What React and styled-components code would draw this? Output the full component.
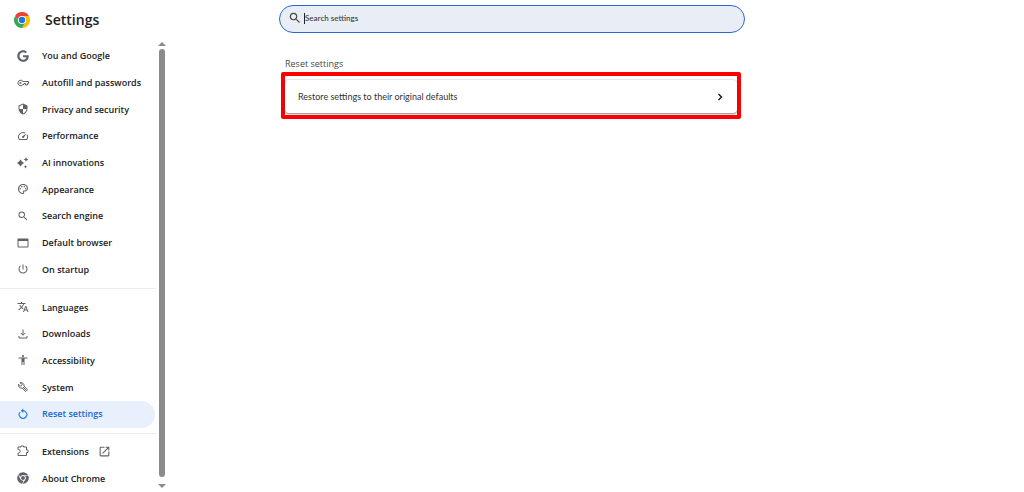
import React, { useState } from 'react';
import styled, { createGlobalStyle } from 'styled-components';
import { FaChrome, FaGoogle } from 'react-icons/fa';
import {
  MdAccessibility,
  MdOpenInNew,
  MdOutlinePalette,
  MdPowerSettingsNew,
  MdSearch,
  MdSecurity,
  MdSpeed,
  MdTranslate,
} from 'react-icons/md';

const colors = {
  text: '#202124',
  icon: '#5f6368',
  accent: '#1967d2',
  selected: '#e8f0fe',
  line: '#ececec',
  highlight: '#ff0000',
};

const ChromeLogo = () => (
  <svg viewBox="0 0 48 48" width="16" height="16" aria-hidden="true">
    <path fill="#ea4335" d="M24 12h20.800A24 24 0 0 0 3.200 12l10.400 18z" />
    <path fill="#fbbc04" d="M34.400 30 24 48a24 24 0 0 0 20.800-36H24z" />
    <path fill="#34a853" d="M13.600 30 3.200 12A24 24 0 0 0 24 48l10.400-18z" />
    <circle cx="24" cy="24" r="12" fill="#fff" />
    <circle cx="24" cy="24" r="9.500" fill="#1a73e8" />
  </svg>
);

const KeyIcon = () => (
  <svg viewBox="0 0 24 24" fill="none" stroke="currentColor" strokeWidth="2" aria-hidden="true">
    <path d="M12 9a5.500 5.500 0 1 0 0 6h2v-2h3v3h4v-3h2V9z" />
    <circle cx="7" cy="12" r="2" fill="currentColor" stroke="none" />
  </svg>
);

const SparkIcon = () => (
  <svg viewBox="0 0 24 24" fill="currentColor" aria-hidden="true">
    <path d="M7 5l3 4 4 3-4 3-3 4-3-4-4-3 4-3z" />
    <path d="M18 0l1.500 3.500L23 5l-3.500 1.500L18 10l-1.500-3.500L13 5l3.500-1.500z" />
    <path d="M17 16l1.200 2.300 2.300 1.200-2.300 1.200L17 23l-1.200-2.300-2.300-1.200 2.300-1.200z" />
  </svg>
);

const BrowserIcon = () => (
  <svg viewBox="0 0 24 24" fill="currentColor" aria-hidden="true">
    <path d="M3 3h18a2 2 0 0 1 2 2v14a2 2 0 0 1-2 2H3a2 2 0 0 1-2-2V5c0-1.100.9-2 2-2zm0 5v11h18V8z" />
  </svg>
);

const DownloadIcon = () => (
  <svg viewBox="0 0 24 24" fill="none" stroke="currentColor" strokeWidth="2" aria-hidden="true">
    <path d="M12 3v11M7.500 10l4.500 4.500 4.500-4.500M4 16v4h16v-4" />
  </svg>
);

const WrenchIcon = () => (
  <svg viewBox="0 0 24 24" fill="none" stroke="currentColor" strokeWidth="2" aria-hidden="true">
    <path d="M6 3.500A6 6 0 0 1 14 10l7 7.500-3.500 3.500-7.500-7A6 6 0 0 1 3 6.500l4 4L10.500 7z" />
    <path d="M12 12l7 7" />
  </svg>
);

const ResetIcon = () => (
  <svg viewBox="0 0 24 24" fill="none" stroke="currentColor" strokeWidth="2.200" aria-hidden="true">
    <path d="M6.500 8a7.500 7.500 0 1 0 11 0A7.500 7.500 0 0 0 12 5.500H9" />
    <path fill="currentColor" stroke="none" d="M12.500 1v9L8 5.500z" />
  </svg>
);

const PuzzleIcon = () => (
  <svg viewBox="0 0 24 24" fill="none" stroke="currentColor" strokeWidth="2" aria-hidden="true">
    <path d="M2 4h6V2h5v2h6v6h3v5h-3v6H2v-5h1a3 3 0 0 0 0-7H2z" />
  </svg>
);

const ChevronIcon = () => (
  <svg viewBox="0 0 8 8" width="8" height="8" fill="none" stroke="#202124" strokeWidth="1.500" aria-hidden="true">
    <path d="M2.500 1l3 3-3 3" />
  </svg>
);

const menu = [
  [
    { label: 'You and Google', icon: <FaGoogle /> },
    { label: 'Autofill and passwords', icon: <KeyIcon /> },
    { label: 'Privacy and security', icon: <MdSecurity /> },
    { label: 'Performance', icon: <MdSpeed /> },
    { label: 'AI innovations', icon: <SparkIcon /> },
    { label: 'Appearance', icon: <MdOutlinePalette /> },
    { label: 'Search engine', icon: <MdSearch /> },
    { label: 'Default browser', icon: <BrowserIcon /> },
    { label: 'On startup', icon: <MdPowerSettingsNew /> },
  ],
  [
    { label: 'Languages', icon: <MdTranslate /> },
    { label: 'Downloads', icon: <DownloadIcon /> },
    { label: 'Accessibility', icon: <MdAccessibility /> },
    { label: 'System', icon: <WrenchIcon /> },
    { label: 'Reset settings', icon: <ResetIcon /> },
  ],
  [
    { label: 'Extensions', icon: <PuzzleIcon />, external: true },
    { label: 'About Chrome', icon: <FaChrome /> },
  ],
];

const App = () => {
  const [active, setActive] = useState('Reset settings');
  const [query, setQuery] = useState('');

  return (
    <>
      <GlobalStyle />
      <Page>
        <Sidebar>
          <Brand>
            <ChromeLogo />
            <h1>Settings</h1>
          </Brand>

          <SidebarBody>
            <Menu aria-label="Settings sections">
              {menu.map((group, index) => (
                <React.Fragment key={group[0].label}>
                  {index > 0 && <Separator />}
                  {group.map((item) => (
                    <MenuLink
                      key={item.label}
                      href="#"
                      $active={item.label === active}
                      onClick={() => setActive(item.label)}
                    >
                      {item.icon}
                      <span>{item.label}</span>
                      {item.external && <MdOpenInNew />}
                    </MenuLink>
                  ))}
                </React.Fragment>
              ))}
            </Menu>

            <ScrollTrack aria-hidden="true">
              <ScrollArrow />
              <ScrollThumb />
              <ScrollArrow $down />
            </ScrollTrack>
          </SidebarBody>
        </Sidebar>

        <Main>
          <SearchBox>
            <MdSearch />
            <Caret />
            <input
              type="text"
              aria-label="Search settings"
              placeholder="Search settings"
              value={query}
              onChange={(e) => setQuery(e.target.value)}
            />
          </SearchBox>

          <Section>
            <h2>Reset settings</h2>
            <Highlight>
              <CardButton type="button">
                <span>Restore settings to their original defaults</span>
                <ChevronIcon />
              </CardButton>
            </Highlight>
          </Section>
        </Main>
      </Page>
    </>
  );
};

export default App;

const GlobalStyle = createGlobalStyle`
  * {
    box-sizing: border-box;
  }

  body {
    margin: 0;
    background-color: #fff;
    color: ${colors.text};
    font-family: 'Open Sans', 'Noto Sans', sans-serif;
    font-size: 9px;
  }

  h1, h2 {
    margin: 0;
  }

  input, button {
    font: inherit;
    color: inherit;
  }
`;

const Page = styled.div`
  display: grid;
  grid-template-columns: minmax(168px, 1fr) minmax(0, 466px) minmax(0, 1fr);
  min-height: 100vh;
`;

const Sidebar = styled.aside`
  display: flex;
  flex-direction: column;
  width: 168px;
  height: 100vh;
`;

const Brand = styled.header`
  display: flex;
  align-items: center;
  gap: 15px;
  height: 40px;
  padding-left: 14px;
  flex-shrink: 0;

  h1 {
    font-size: 14px;
    font-weight: 600;
    line-height: 20px;
  }
`;

const SidebarBody = styled.div`
  display: flex;
  flex: 1;
  min-height: 0;
`;

const Menu = styled.nav`
  display: flex;
  flex-direction: column;
  flex: 1;
  padding-top: 3px;
  overflow: hidden;
`;

const MenuLink = styled.a`
  display: flex;
  align-items: center;
  flex: 1;
  margin-right: 1px;
  padding-left: 16px;
  border-radius: 0 14px 14px 0;
  background-color: ${({ $active }) => ($active ? colors.selected : 'transparent')};
  color: ${({ $active }) => ($active ? colors.accent : colors.text)};
  font-weight: 600;
  line-height: 12px;
  text-decoration: none;
  white-space: nowrap;

  span {
    margin: 0 9px 0 13px;
  }

  svg {
    width: 13px;
    height: 13px;
    flex-shrink: 0;
    color: ${({ $active }) => ($active ? '#1a73e8' : colors.icon)};
  }

  svg:first-child {
    padding: 0 0 1px 1px;
  }
`;

const Separator = styled.hr`
  width: 100%;
  height: 1px;
  margin: 5px 0;
  border: 0;
  background-color: ${colors.line};
  flex-shrink: 0;
`;

const ScrollTrack = styled.div`
  display: flex;
  flex-direction: column;
  align-items: center;
  width: 12px;
  padding: 2px 0 4px;
`;

const ScrollThumb = styled.div`
  flex: 1;
  width: 6px;
  margin: 3px 0 7px;
  border-radius: 3px;
  background-color: #8b8b8b;
`;

const ScrollArrow = styled.div`
  border: 4px solid transparent;
  border-top-width: ${({ $down }) => ($down ? '4px' : 0)};
  border-bottom-width: ${({ $down }) => ($down ? 0 : '4px')};
  border-top-color: #8b8b8b;
  border-bottom-color: #8b8b8b;
`;

const Main = styled.main`
  padding-top: 5px;
`;

const SearchBox = styled.label`
  display: flex;
  align-items: center;
  height: 28px;
  padding: 0 8px 2px;
  border: 1px solid #2b67d1;
  border-radius: 14px;
  background-color: #e9eef6;

  svg {
    width: 14px;
    height: 14px;
    margin-right: 2px;
    color: #474747;
  }

  input {
    flex: 1;
    min-width: 0;
    padding: 0;
    border: 0;
    outline: 0;
    background: transparent;
    font-family: 'Lato', 'Open Sans', sans-serif;
    font-size: 8px;
    font-weight: 600;
  }

  input::placeholder {
    color: #474747;
    opacity: 1;
  }
`;

const Caret = styled.span`
  width: 1px;
  height: 11px;
  background-color: ${colors.text};
`;

const Section = styled.section`
  padding: 24px 4px 0 2px;

  h2 {
    padding-left: 4px;
    color: #474747;
    font-size: 9px;
    font-weight: 400;
    line-height: 14px;
  }
`;

const Highlight = styled.div`
  margin-top: 1px;
  padding: 4px 0 2px;
  border: 4px solid ${colors.highlight};
  border-radius: 2px;
`;

const CardButton = styled.button`
  display: flex;
  align-items: center;
  justify-content: space-between;
  width: 100%;
  height: 33px;
  padding: 0 13px;
  border: 0;
  border-radius: 4px;
  background-color: #fff;
  box-shadow: 0 1px 2px rgba(60, 64, 67, 0.6), 0 0 2px rgba(60, 64, 67, 0.3);
  color: #333;
  font-family: 'Lato', 'Open Sans', sans-serif;
  text-align: left;
`;
